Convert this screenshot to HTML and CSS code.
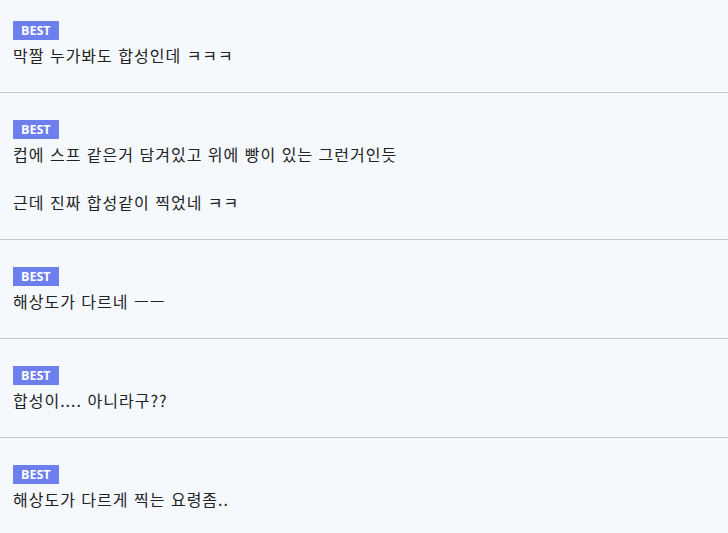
FILE: index.html
```html
<!DOCTYPE html>
<html lang="ko">
<head>
<meta charset="utf-8">
<link rel="stylesheet" href="styles.css">
</head>
<body>
<ul class="comments">
  <li class="comment">
    <span class="badge">BEST</span>
    <p class="text">막짤 누가봐도 합성인데 ㅋㅋㅋ</p>
  </li>
  <li class="comment">
    <span class="badge">BEST</span>
    <p class="text">컵에 스프 같은거 담겨있고 위에 빵이 있는 그런거인듯<br><br>근데 진짜 합성같이 찍었네 ㅋㅋ</p>
  </li>
  <li class="comment">
    <span class="badge">BEST</span>
    <p class="text">해상도가 다르네 ㅡㅡ</p>
  </li>
  <li class="comment">
    <span class="badge">BEST</span>
    <p class="text">합성이.... 아니라구??</p>
  </li>
  <li class="comment">
    <span class="badge">BEST</span>
    <p class="text">해상도가 다르게 찍는 요령좀..</p>
  </li>
</ul>
</body>
</html>
```
FILE: styles.css
```css
html, body {
  margin: 0;
  padding: 0;
  background: #f5f8fd;
}
body {
  font-family: "Noto Sans CJK KR", "Noto Sans", sans-serif;
  color: #222;
}
.comments {
  list-style: none;
  margin: 0;
  padding: 0;
}
.comment {
  display: flex;
  flex-direction: column;
  align-items: flex-start;
  padding: 27px 13px 25px;
  border-bottom: 1px solid #c6c9ce;
}
.comment:first-child {
  padding-top: 21px;
}
.badge {
  display: block;
  background: #6d7fef;
  color: #fff;
  font-family: "Open Sans", "Noto Sans", sans-serif;
  font-weight: 700;
  font-size: 12.5px;
  line-height: 19px;
  padding: 0 8px;
}
.text {
  margin: 3px 0 0;
  font-size: 16px;
  line-height: 24px;
  letter-spacing: 1px;
}
```
